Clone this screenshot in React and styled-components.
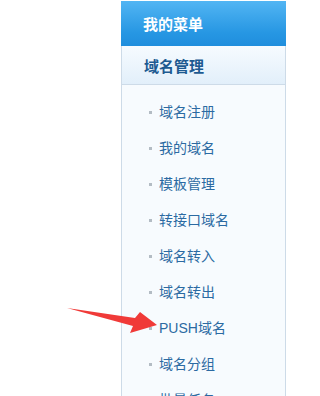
import React from "react";
import styled, { createGlobalStyle } from "styled-components";

const Global = createGlobalStyle`
  html, body { margin: 0; padding: 0; background: #ffffff; }
  body { font-family: "Liberation Sans", "Noto Sans CJK SC", sans-serif; overflow: hidden; }
`;

const Page = styled.div`
  position: relative;
  width: 294px;
  height: 396px;
  overflow: hidden;
  padding: 1px 0 0 121px;
  box-sizing: border-box;
`;

const Panel = styled.div`
  width: 165px;
  display: flex;
  flex-direction: column;
`;

const Title = styled.div`
  height: 45px;
  display: flex;
  align-items: center;
  padding-left: 22px;
  background: linear-gradient(#52b5f3, #2797e3 70%, #1f8edd);
  color: #ffffff;
  font-weight: bold;
  font-size: 15px;
  font-family: "Noto Sans CJK SC", sans-serif;
`;

const Section = styled.div`
  height: 38px;
  display: flex;
  align-items: center;
  padding-left: 22px;
  background: linear-gradient(#f6fbff, #e2effa);
  border: 1px solid #cddbe8;
  border-top: none;
  color: #1d5a91;
  font-weight: bold;
  font-size: 15px;
  font-family: "Noto Sans CJK SC", sans-serif;
`;

const List = styled.ul`
  list-style: none;
  margin: 0;
  padding: 8px 0 0 0;
  background: #f7fbfe;
  border-left: 1px solid #cddbe8;
  border-right: 1px solid #cddbe8;
  height: 320px;
`;

const Item = styled.li`
  height: 36px;
  display: flex;
  align-items: center;
  padding-left: 27px;
  color: #2b6aa2;
  font-size: 14px;
  &::before {
    content: "";
    width: 3px;
    height: 3px;
    background: #b3bcc4;
    margin-right: 7px;
    margin-top: 2px;
  }
`;

const Arrow = styled.svg`
  position: absolute;
  left: 0;
  top: 0;
  pointer-events: none;
`;

const items = [
  "域名注册",
  "我的域名",
  "模板管理",
  "转接口域名",
  "域名转入",
  "域名转出",
  "PUSH域名",
  "域名分组",
  "批量任务",
];

export default function App() {
  return (
    <>
      <Global />
      <Page>
        <Panel>
          <Title>我的菜单</Title>
          <Section>域名管理</Section>
          <List>
            {items.map((t) => (
              <Item key={t}>{t}</Item>
            ))}
          </List>
        </Panel>
        <Arrow width="294" height="396" viewBox="0 0 294 396">
          <polygon
            points="67,308 135,318 140,312 157,325 130,333 133,326"
            fill="#f03a38"
          />
        </Arrow>
      </Page>
    </>
  );
}
